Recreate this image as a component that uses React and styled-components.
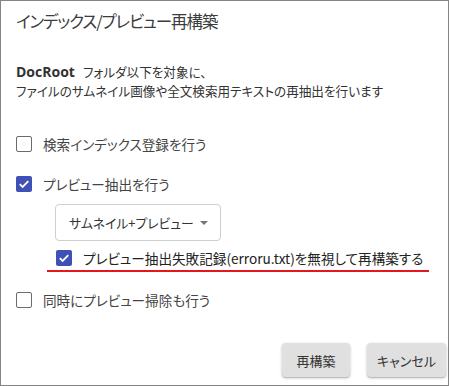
import React from "react";
import styled, { createGlobalStyle } from "styled-components";

const Global = createGlobalStyle`
  html, body { margin: 0; padding: 0; background: #fff; }
  body { font-family: "Noto Sans CJK JP", "Noto Sans", sans-serif; }
`;

const Dialog = styled.div`
  width: 449px;
  height: 386px;
  box-sizing: border-box;
  border: 1px solid #858585;
  background: #fff;
  display: flex;
  flex-direction: column;
  padding: 0 0 0 15px;
  font-feature-settings: "palt";
  color: #333;
`;

const Title = styled.h1`
  margin: 6px 0 0 0;
  font-size: 16.5px;
  line-height: 28px;
  letter-spacing: -1.1px;
  font-weight: 400;
  color: #3c3c3c;
`;

const Desc = styled.p`
  margin: 27px 0 0 0;
  font-size: 12.6px;
  line-height: 19px;
  color: #333;
  b {
    font-family: "Open Sans", sans-serif;
    font-weight: 700;
    font-size: 14px;
    line-height: 1;
    margin-right: 8px;
  }
`;

const Options = styled.div`
  display: flex;
  flex-direction: column;
  margin-top: 36px;
`;

const Row = styled.label`
  display: flex;
  align-items: center;
  height: 16px;
  gap: 11px;
  margin-left: ${p => (p.$indent ? "40px" : "0")};
  margin-top: ${p => p.$mt || 0}px;
  font-size: 13.6px;
  color: ${p => (p.$dark ? "#222" : "#444")};
  position: relative;
`;

const Box = styled.span`
  width: 16px;
  height: 16px;
  box-sizing: border-box;
  border-radius: 2px;
  border: ${p => (p.$on ? "none" : "1.5px solid #6b6b6b")};
  background: ${p => (p.$on ? "#3f51b5" : "#fff")};
  display: inline-flex;
  align-items: center;
  justify-content: center;
  flex: none;
`;

const Underline = styled.span`
  position: absolute;
  left: -9px;
  width: 382px;
  top: 20px;
  height: 2px;
  background: #e5161e;
`;

const Select = styled.div`
  margin: 12px 0 0 39px;
  width: 166px;
  height: 37px;
  box-sizing: border-box;
  border: 1px solid #cfcfcf;
  border-radius: 4px;
  display: flex;
  align-items: center;
  justify-content: space-between;
  padding: 0 12px 0 13px;
  font-size: 12.8px;
  color: #333;
`;

const Caret = styled.span`
  width: 0;
  height: 0;
  border-left: 4px solid transparent;
  border-right: 4px solid transparent;
  border-top: 4px solid #757575;
`;

const Footer = styled.div`
  margin-top: auto;
  display: flex;
  justify-content: flex-end;
  gap: 17px;
  padding: 0 2px 8px 0;
`;

const Button = styled.button`
  height: 34px;
  width: ${p => p.$w}px;
  border: none;
  border-radius: 4px;
  background: #e0e0e0;
  box-shadow: 0 1px 3px rgba(0,0,0,0.25), 0 1px 1px rgba(0,0,0,0.12);
  font-family: inherit;
  font-feature-settings: "palt";
  font-size: 13px;
  color: #333;
  padding: 0;
`;

const Check = () => (
  <svg width="12" height="12" viewBox="0 0 12 12">
    <path d="M1.8 6.2 L4.6 9 L10.3 3.2" fill="none" stroke="#fff" strokeWidth="1.8" />
  </svg>
);

export default function App() {
  return (
    <>
      <Global />
      <Dialog>
        <Title>インデックス/プレビュー再構築</Title>
        <Desc>
          <b>DocRoot</b>フォルダ以下を対象に、<br />
          ファイルのサムネイル画像や全文検索用テキストの再抽出を行います
        </Desc>
        <Options>
          <Row>
            <Box />
            検索インデックス登録を行う
          </Row>
          <Row $mt={24}>
            <Box $on><Check /></Box>
            プレビュー抽出を行う
          </Row>
          <Select>
            サムネイル+プレビュー
            <Caret />
          </Select>
          <Row $indent $mt={9} $dark>
            <Box $on><Check /></Box>
            プレビュー抽出失敗記録(erroru.txt)を無視して再構築する
            <Underline />
          </Row>
          <Row $mt={26}>
            <Box />
            同時にプレビュー掃除も行う
          </Row>
        </Options>
        <Footer>
          <Button $w={68}>再構築</Button>
          <Button $w={79}>キャンセル</Button>
        </Footer>
      </Dialog>
    </>
  );
}
